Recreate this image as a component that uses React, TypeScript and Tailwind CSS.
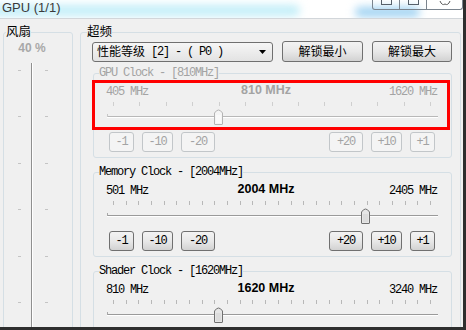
import React from "react";

const mono = "font-['Liberation_Mono',monospace]";
const cjk = "font-['Liberation_Sans','Noto_Sans_CJK_SC',sans-serif]";
const sans = "font-['Liberation_Sans',Arial,sans-serif]";

function Btn({ label, w, disabled }: { label: string; w: string; disabled?: boolean }) {
  return (
    <div
      className={`${w} h-[20px] rounded-[3px] border flex items-center justify-center text-[12px] leading-[12px] tracking-[-1.2px] ${mono} ${
        disabled
          ? "border-[#c2c6c9] bg-[#f4f4f4] text-[#a3a3a3]"
          : "border-[#707070] bg-linear-to-b from-[#f3f3f3] via-[#e8e8e8] to-[#d2d2d2] text-black"
      }`}
    >
      {label}
    </div>
  );
}

function Slider({ thumb, count, disabled }: { thumb: number; count: number; disabled?: boolean }) {
  const ticks = Array.from({ length: count }, (_, i) => 19 + (i * (336 - 19)) / (count - 1));
  const stroke = disabled ? "#b4b4b4" : "#707070";
  const fill = disabled ? "#f5f5f5" : "#e6e6e6";
  return (
    <svg width="356" height="28" className="block">
      {ticks.map((x, i) => (
        <rect key={i} x={Math.round(x)} y={4} width={1} height={4} fill={disabled ? "#cfcfcf" : "#b8b8b8"} />
      ))}
      <rect x={13} y={18} width={331} height={1} fill={disabled ? "#b8b8b8" : "#9a9a9a"} />
      <rect x={13} y={19} width={331} height={1} fill="#ffffff" />
      <rect x={13} y={16} width={1} height={3} fill={disabled ? "#c8c8c8" : "#a8a8a8"} />
      <path
        transform={`translate(${thumb} 10)`}
        d="M0.5 16 V5 Q4.5 -1 8.5 5 V16 Q8.5 16.5 8 16.5 H1 Q0.5 16.5 0.5 16 Z"
        fill={fill}
        stroke={stroke}
      />
      <rect x={thumb + 2} y={17} width={5} height={8} fill={disabled ? "#fafafa" : "#dcdcdc"} />
    </svg>
  );
}

function ClockGroup({
  title,
  min,
  cur,
  max,
  thumb,
  count,
  disabled,
  first,
  last,
}: {
  title: string;
  min: string;
  cur: string;
  max: string;
  thumb: number;
  count: number;
  disabled?: boolean;
  first?: boolean;
  last?: boolean;
}) {
  const txt = disabled ? "text-[#a3a3a3]" : "text-black";
  return (
    <fieldset
      className={`ml-[12px] w-[359px] border border-[#d5dfe5] rounded-[3px] pb-[5px] ${first ? "mt-[5px]" : "mt-[8px]"}`}
    >
      <legend className={`ml-[5px] text-[12px] leading-[12px] tracking-[-1.2px] ${mono} ${txt}`}>{title}</legend>
      <div className="mt-[5px] h-[14px] flex items-start">
        <span className={`ml-[12px] w-[100px] mt-[2px] text-[12px] leading-[12px] tracking-[-1.2px] ${mono} ${txt}`}>
          {min}
        </span>
        <span className={`w-[120px] text-center text-[12.5px] leading-[12px] font-bold ${sans} ${txt}`}>{cur}</span>
        <span
          className={`flex-1 pr-[14px] mt-[2px] text-right text-[12px] leading-[12px] tracking-[-1.2px] ${mono} ${txt}`}
        >
          {max}
        </span>
      </div>
      <Slider thumb={thumb} count={count} disabled={disabled} />
      {last ? (
        <div className="h-[26px]" />
      ) : (
        <div className="mt-[6px] ml-[15px] mr-[16px] flex justify-between">
          <div className="flex gap-[8px]">
            <Btn label="-1" w="w-[25px]" disabled={disabled} />
            <Btn label="-10" w="w-[31px]" disabled={disabled} />
            <Btn label="-20" w="w-[34px]" disabled={disabled} />
          </div>
          <div className="flex gap-[8px]">
            <Btn label="+20" w="w-[34px]" disabled={disabled} />
            <Btn label="+10" w="w-[31px]" disabled={disabled} />
            <Btn label="+1" w="w-[25px]" disabled={disabled} />
          </div>
        </div>
      )}
    </fieldset>
  );
}

function FanTrack() {
  const ys = [16, 62, 109, 155, 202, 248, 294];
  return (
    <svg width="68" height="280" className="block">
      <rect x={27} y={9} width={1} height={271} fill="#8f8f8f" />
      <rect x={28} y={9} width={1} height={271} fill="#ffffff" />
      {ys.map((y) => (
        <g key={y}>
          <rect x={14} y={y} width={3} height={1} fill="#c4c4c4" />
          <rect x={41} y={y} width={3} height={1} fill="#c4c4c4" />
        </g>
      ))}
    </svg>
  );
}

export default function App() {
  return (
    <div className="w-[466px] h-[330px] bg-white">
      <div className="relative w-[466px] h-[330px] border-r-[3px] border-b-[3px] border-[#2e2e2e] bg-[#f0f0f0] overflow-hidden flex flex-col">
        <div className="relative h-[19px] shrink-0 bg-white border-b border-[#d2d6da] overflow-hidden">
          <div className="absolute left-[-20px] top-[5px] w-[320px] h-[11px] rounded-full bg-[#c2eef8] blur-[4px]" />
          <div className="absolute left-[355px] top-[7px] w-[65px] h-[10px] rounded-full bg-[#9fd2f2] blur-[4px]" />
          <span className={`relative block pl-[2px] text-[13px] leading-[16px] text-[#3a3a3a] ${sans}`}>GPU (1/1)</span>
          <div className="absolute left-[372px] top-0 flex">
            <div className="w-[28px] h-[10px] border border-t-0 border-[#7a848e] rounded-bl-[3px] flex justify-center">
              <div className="w-[11px] h-[5px] border border-t-0 border-[#56606a]" />
            </div>
            <div className="w-[27px] h-[10px] border border-t-0 border-l-0 border-[#7a848e] flex justify-center">
              <div className="w-[11px] h-[5px] border border-t-0 border-[#56606a]" />
            </div>
            <div className="w-[36px] h-[10px] border border-t-0 border-l-0 border-[#7a848e] rounded-br-[3px] flex justify-center">
              <svg width="12" height="8" className="block">
                <path d="M1 1 Q3 6 6 4 Q9 6 11 1" fill="none" stroke="#5a5a5a" strokeWidth="1" />
              </svg>
            </div>
          </div>
        </div>

        <div className="flex pl-[3px] pt-[7px]">
          <fieldset className="w-[70px] h-[310px] shrink-0 border border-[#d5dfe5] rounded-[3px]">
            <legend className={`ml-[2px] text-[12.5px] leading-[13px] text-black ${cjk}`}>风扇</legend>
            <div className={`mt-[3px] w-[56px] text-center text-[12px] leading-[12px] font-bold text-[#a8a8a8] ${sans}`}>
              40 %
            </div>
            <FanTrack />
          </fieldset>

          <fieldset className="ml-[7px] w-[381px] h-[310px] shrink-0 border border-[#d5dfe5] rounded-[3px]">
            <legend className={`ml-[6px] text-[12.5px] leading-[13px] text-black ${cjk}`}>超频</legend>
            <div className="mt-[2px] ml-[11px] h-[21px] flex items-center">
              <div className="w-[181px] h-[20px] rounded-[3px] border border-[#707070] bg-linear-to-b from-[#f6f6f6] to-[#e3e3e3] flex items-center pl-[4px] pr-[6px]">
                <span className={`text-[12px] leading-[12px] text-black ${cjk}`}>性能等级</span>
                <span className={`text-[12px] leading-[12px] tracking-[-1.2px] text-black ${mono}`}>&nbsp;[2] - ( P0 )</span>
                <svg width="7" height="4" className="ml-auto block">
                  <path d="M0 0 H7 L3.5 4 Z" fill="#000" />
                </svg>
              </div>
              <div className={`ml-[9px] w-[81px] h-[21px] rounded-[3px] border border-[#707070] bg-linear-to-b from-[#f3f3f3] via-[#e8e8e8] to-[#d2d2d2] flex items-center justify-center text-[12px] text-black ${cjk}`}>
                解锁最小
              </div>
              <div className={`ml-[9px] w-[80px] h-[21px] rounded-[3px] border border-[#707070] bg-linear-to-b from-[#f3f3f3] via-[#e8e8e8] to-[#d2d2d2] flex items-center justify-center text-[12px] text-black ${cjk}`}>
                解锁最大
              </div>
            </div>
            <ClockGroup
              first
              disabled
              title="GPU Clock - [810MHz]"
              min="405 MHz"
              cur="810 MHz"
              max="1620 MHz"
              thumb={120}
              count={13}
            />
            <ClockGroup
              title="Memory Clock - [2004MHz]"
              min="501 MHz"
              cur="2004 MHz"
              max="2405 MHz"
              thumb={267}
              count={26}
            />
            <ClockGroup
              last
              title="Shader Clock - [1620MHz]"
              min="810 MHz"
              cur="1620 MHz"
              max="3240 MHz"
              thumb={120}
              count={26}
            />
          </fieldset>
        </div>

        <div className="absolute left-[92px] top-[80px] w-[358px] h-[50px] border-[3px] border-[#ff0000]" />
      </div>
    </div>
  );
}
